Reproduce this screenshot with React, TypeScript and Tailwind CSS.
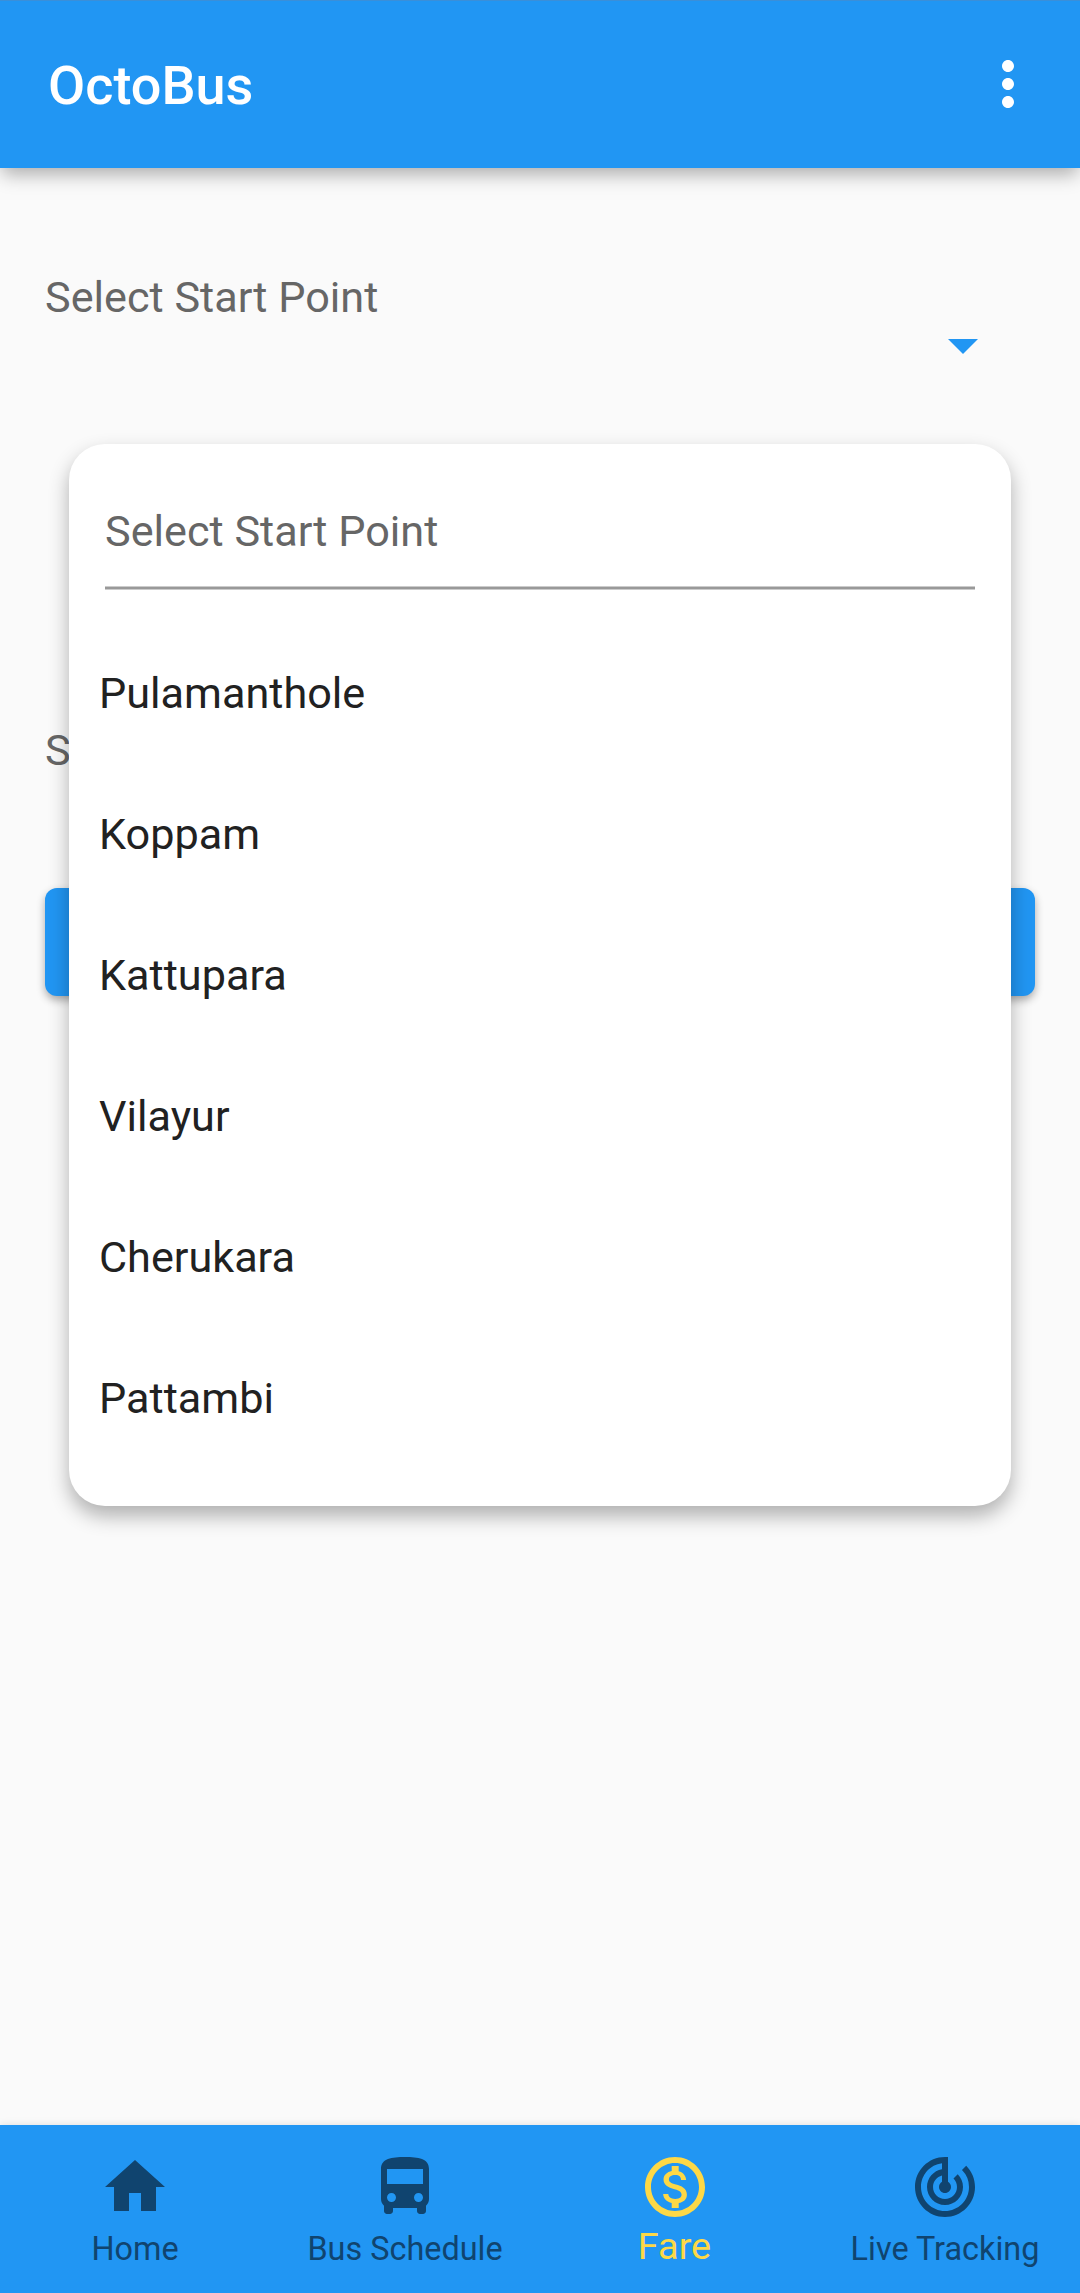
import type { IconType } from "react-icons";
import {
  MdArrowDropDown,
  MdDirectionsBus,
  MdHome,
  MdMoreVert,
  MdOutlineMonetizationOn,
  MdTrackChanges,
} from "react-icons/md";

const stops = ["Pulamanthole", "Koppam", "Kattupara", "Vilayur", "Cherukara", "Pattambi"];

const tabs: { label: string; Icon: IconType; active?: boolean }[] = [
  { label: "Home", Icon: MdHome },
  { label: "Bus Schedule", Icon: MdDirectionsBus },
  { label: "Fare", Icon: MdOutlineMonetizationOn, active: true },
  { label: "Live Tracking", Icon: MdTrackChanges },
];

function AppBar() {
  return (
    <header className="z-10 flex h-[168px] shrink-0 items-start justify-between border-t border-[#3a8fd9] bg-[#2196f3] pt-[47px] pr-9 pl-12 text-white shadow-[0_8px_18px_-2px_rgba(0,0,0,0.32)]">
      <h1 className="mt-2 text-[54px] leading-[60px] font-medium">OctoBus</h1>
      <button aria-label="More options">
        <MdMoreVert className="size-[72px]" />
      </button>
    </header>
  );
}

function StopMenu() {
  return (
    <div className="absolute inset-x-[69px] top-[276px] h-[1062px] rounded-[36px] bg-white shadow-[0_10px_20px_rgba(0,0,0,0.3)]">
      <div className="mx-9 flex h-[142px] items-end pb-[30px] text-[#666666]">
        <span className="leading-12">Select Start Point</span>
      </div>
      <div className="mx-9 h-1 border-y border-[#cccccc] bg-[#999999]" />
      <ul className="mt-[33px] pl-[30px] text-[#212121]">
        {stops.map((stop) => (
          <li key={stop} className="flex h-[141px] items-center leading-12">
            {stop}
          </li>
        ))}
      </ul>
    </div>
  );
}

function BottomNav() {
  return (
    <nav className="z-10 grid h-[168px] shrink-0 grid-cols-4 bg-[#2196f3] shadow-[0_0_8px_rgba(0,0,0,0.12)]">
      {tabs.map(({ label, Icon, active }) =>
        active ? (
          <a key={label} className="flex flex-col items-center pt-[26px] text-[#fdd846]">
            <Icon className="size-[72px]" />
            <span className="pr-px text-[37.8px] leading-[46px] whitespace-nowrap">{label}</span>
          </a>
        ) : (
          <a key={label} className="flex flex-col items-center pt-[26px] text-[#10446f]">
            <Icon className="size-[72px]" />
            <span className="mt-1 text-[32.4px] leading-[44px] whitespace-nowrap">{label}</span>
          </a>
        ),
      )}
    </nav>
  );
}

export default function App() {
  return (
    <div className="flex h-[2293px] w-[1080px] flex-col overflow-hidden bg-[#fafafa] font-['Roboto',sans-serif] text-[43.2px]">
      <AppBar />
      <main className="relative flex flex-1 flex-col px-[45px] pt-[106px] text-[#666666]">
        <div className="flex items-start justify-between pr-9">
          <span className="leading-12">Select Start Point</span>
          <MdArrowDropDown className="mt-[35px] size-[72px] text-[#2196f3]" />
        </div>
        <span className="mt-[346px] leading-12">Select End Point</span>
        <button className="mt-[113px] h-[108px] rounded-xl bg-[#2196f3] shadow-[0_4px_8px_rgba(0,0,0,0.32)]" />
        <StopMenu />
      </main>
      <BottomNav />
    </div>
  );
}
